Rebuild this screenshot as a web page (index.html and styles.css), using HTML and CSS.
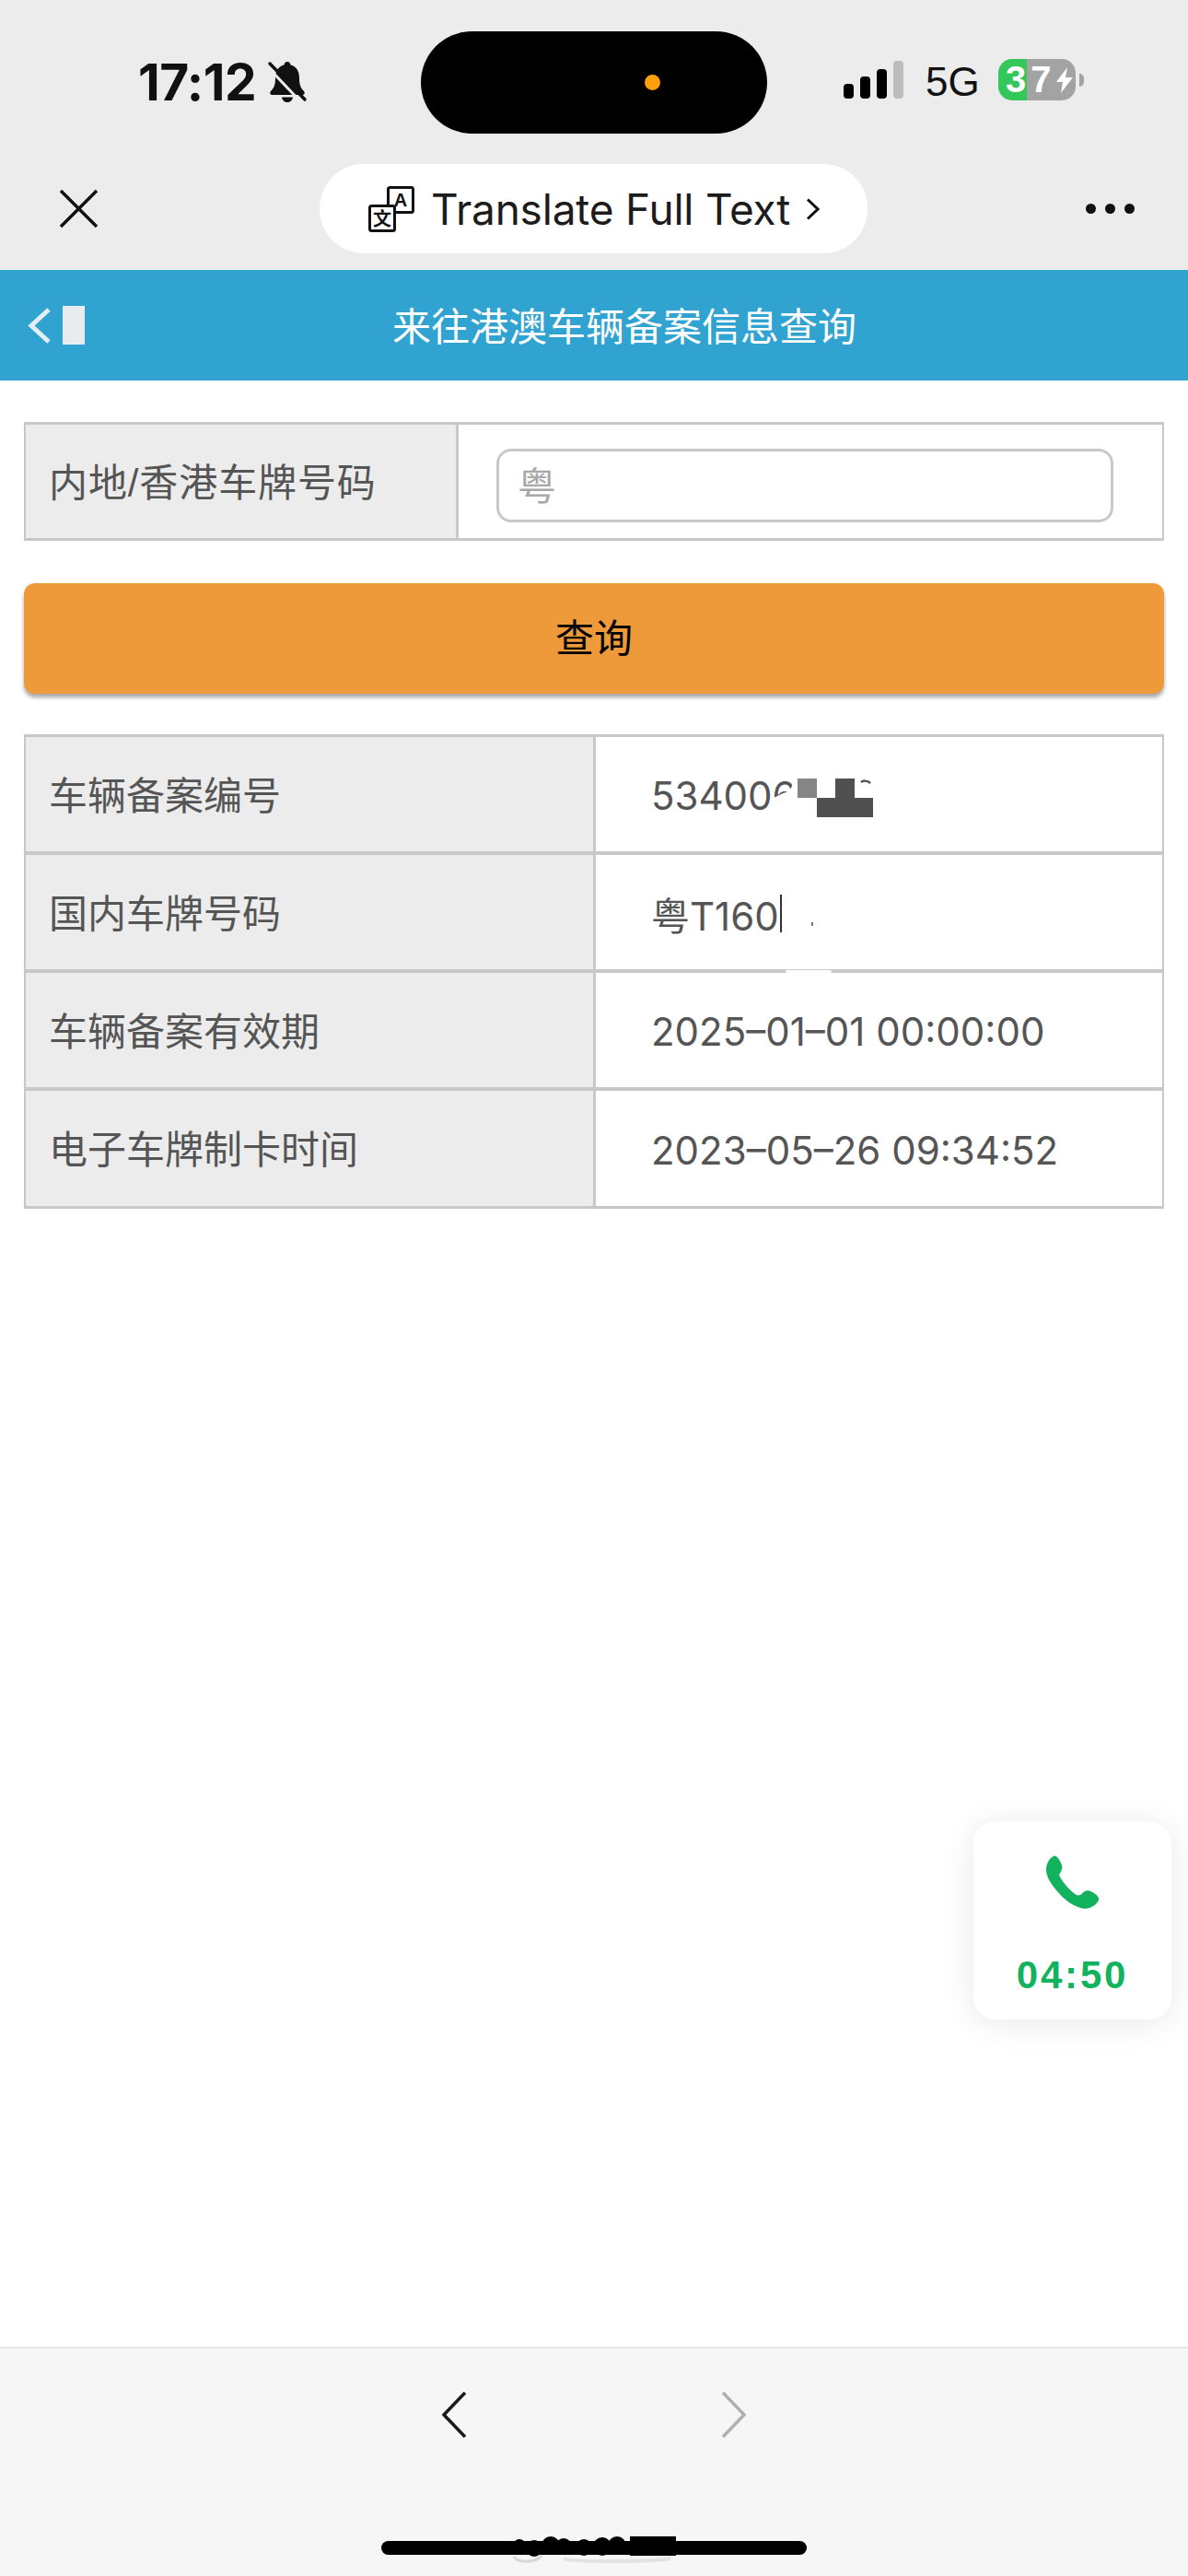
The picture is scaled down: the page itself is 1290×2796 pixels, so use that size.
FILE: index.html
```html
<!DOCTYPE html>
<html lang="zh-CN">
<head>
    <meta charset="UTF-8">
    <meta name="viewport" content="width=device-width, initial-scale=1.0">
    <title>来往港澳车辆备案信息查询</title>
    <link rel="stylesheet" href="styles.css">
</head>
<body>
    <div class="top-chrome">
        <div class="status-bar">
            <span class="time">17:12</span>
            <svg class="bell" viewBox="0 0 44 46">
                <path d="M22 1c-2 0-3.500 1.500-3.500 3.500C11.500 6 9 12 9 19c0 6-1 10-5 14-1.500 2-.5 4 2 4h32c2.500 0 3.500-2 2-4-4-4-5-8-5-14 0-7-2.500-13-9.500-14.500C25.500 2.500 24 1 22 1z" fill="#111"/>
                <path d="M16 39.500h12c-.5 3.500-3 5.500-6 5.500s-5.500-2-6-5.500z" fill="#111"/>
                <path d="M0 6l37 39" stroke="#ececec" stroke-width="3"/>
                <path d="M3 3l38 39" stroke="#111" stroke-width="3.500" stroke-linecap="round"/>
            </svg>
            <div class="island"><span class="island-dot"></span></div>
            <div class="signal">
                <span class="bar bar-1"></span>
                <span class="bar bar-2"></span>
                <span class="bar bar-3"></span>
                <span class="bar bar-4"></span>
            </div>
            <span class="network">5G</span>
            <div class="battery">
                <span class="battery-level">37</span>
                <svg class="bolt" viewBox="0 0 18 28"><path d="M12 0L0 16h7l-2 12L18 11h-8z" fill="#fff"/></svg>
            </div>
            <span class="battery-nub"></span>
        </div>
        <div class="nav-row">
            <svg class="close-icon" viewBox="0 0 43 43"><path d="M2 2l39 39M41 2L2 41" stroke="#111" stroke-width="3.500" fill="none"/></svg>
            <div class="translate-pill">
                <svg class="translate-icon" viewBox="0 0 50 50">
                    <rect x="21.500" y="1.500" width="27" height="27" rx="2" fill="#fff" stroke="#111" stroke-width="3"/>
                    <text x="35" y="22" class="icon-a">A</text>
                    <rect x="1.500" y="21.500" width="27" height="27" rx="2" fill="#fff" stroke="#111" stroke-width="3"/>
                    <text x="15" y="43" class="icon-wen">文</text>
                </svg>
                <span class="translate-text">Translate Full Text</span>
                <svg class="translate-arrow" viewBox="0 0 15 24"><path d="M2 1.500L13 12 2 22.500" stroke="#111" stroke-width="3" fill="none"/></svg>
            </div>
            <div class="more-dots"><span></span><span></span><span></span></div>
        </div>
    </div>

    <header class="page-header">
        <svg class="back-icon" viewBox="0 0 27 41"><path d="M24 3L5 20.500 24 38" stroke="#e4eef5" stroke-width="5" fill="none"/></svg>
        <span class="back-mask"></span>
        <h1>来往港澳车辆备案信息查询</h1>
    </header>

    <main class="content">
        <div class="search-table">
            <div class="label-cell">内地/香港车牌号码</div>
            <div class="input-cell">
                <div class="plate-input">粤</div>
            </div>
        </div>

        <button class="search-button">查询</button>

        <div class="info-table">
            <div class="label-cell">车辆备案编号</div>
            <div class="value-cell">
                534006
                <svg class="mosaic" viewBox="0 0 120 50">
                    <polygon points="0,26 12,20 22,16 28,0 120,0 120,50 0,50" fill="#fff"/>
                    <rect x="30" y="3" width="21" height="21" fill="#858585"/>
                    <rect x="71" y="3" width="21" height="21" fill="#505050"/>
                    <rect x="51" y="24" width="61" height="21" fill="#505050"/>
                    <path d="M99 7c2-2 7-2 10 1" stroke="#505050" stroke-width="2.500" fill="none"/>
                </svg>
            </div>
            <div class="label-cell">国内车牌号码</div>
            <div class="value-cell">粤T160<span class="caret"></span><span class="speck"></span><span class="line-smudge"></span></div>
            <div class="label-cell">车辆备案有效期</div>
            <div class="value-cell">2025–01–01 00:00:00</div>
            <div class="label-cell">电子车牌制卡时间</div>
            <div class="value-cell">2023–05–26 09:34:52</div>
        </div>
    </main>

    <div class="call-card">
        <svg class="call-icon" viewBox="0 0 171 172">
            <path d="M28 0C38 2 46 18 51 30C54 40 50 50 42 62C50 82 72 108 95 125C104 131 112 130 120 120C130 110 142 112 152 119C164 127 173 134 171 142C168 155 150 171 125 172C95 170 62 145 42 122C18 95 0 70 0 45C0 25 12 4 28 0Z" fill="#13b25f"/>
        </svg>
        <span class="call-time">04:50</span>
    </div>

    <footer class="bottom-bar">
        <div class="page-arrows">
            <svg class="arrow" viewBox="0 0 26 50"><path d="M25 1L2 25l23 24" stroke="#1a1a1a" stroke-width="3.500" fill="none"/></svg>
            <svg class="arrow" viewBox="0 0 26 50"><path d="M1 1l23 24L1 49" stroke="#b0b0b0" stroke-width="3.500" fill="none"/></svg>
        </div>
        <div class="home-bar">
            <svg class="home-smudge" viewBox="0 0 186 40">
                <path d="M8 31c4 7 24 7 30-1" stroke="#d8d8d8" stroke-width="3" fill="none"/>
                <path d="M62 33c10 4 90 4 116 0" stroke="#e2e2e2" stroke-width="4" fill="none"/>
                <g class="smudge-blobs">
                    <rect x="0" y="14" width="186" height="15"/>
                    <circle cx="14" cy="19" r="7"/>
                    <circle cx="30" cy="22" r="9"/>
                    <circle cx="48" cy="19" r="10"/>
                    <circle cx="62" cy="20" r="9"/>
                    <circle cx="84" cy="21" r="9"/>
                    <circle cx="104" cy="20" r="10"/>
                    <circle cx="120" cy="19" r="10"/>
                    <rect x="134" y="9" width="50" height="21"/>
                </g>
            </svg>
        </div>
    </footer>
</body>
</html>
```

FILE: styles.css
```css
body {
    margin: 0;
    width: 1290px;
    height: 2796px;
    display: flex;
    flex-direction: column;
    position: relative;
    overflow: hidden;
    background: white;
    font-family: "Liberation Sans", "Noto Sans CJK SC", sans-serif;
    color: #555;
}

.top-chrome {
    height: 293px;
    background-color: #ececec;
}

.status-bar {
    height: 178px;
    display: flex;
    align-items: center;
    padding-left: 150px;
    box-sizing: border-box;
}

.time {
    width: 128px;
    font-family: Inter, sans-serif;
    font-size: 55px;
    font-weight: 700;
    letter-spacing: -0.5px;
    color: #111;
}

.bell {
    width: 44px;
    height: 46px;
    margin-left: 12px;
}

.island {
    width: 376px;
    height: 111px;
    margin-left: 123px;
    background: black;
    border-radius: 56px;
    display: flex;
    align-items: center;
}

.island-dot {
    width: 17px;
    height: 17px;
    margin-left: 243px;
    background: #ff9f0a;
    border-radius: 50%;
}

.signal {
    display: flex;
    align-items: flex-end;
    gap: 7px;
    margin-left: 83px;
    margin-bottom: 5px;
}

.bar {
    width: 11px;
    background: black;
    border-radius: 4px;
}

.bar-1 { height: 16px; }
.bar-2 { height: 24px; }
.bar-3 { height: 32px; }
.bar-4 { height: 41px; background: #bcbcbc; }

.network {
    margin-left: 24px;
    width: 55px;
    font-size: 44px;
    color: #111;
}

.battery {
    width: 84px;
    height: 45px;
    margin-left: 24px;
    margin-bottom: 5px;
    display: flex;
    align-items: center;
    padding-left: 8px;
    box-sizing: border-box;
    border-radius: 15px;
    background: linear-gradient(to right, #34c759 37%, #a3a3a3 37%);
}

.battery-level {
    font-size: 40px;
    font-weight: bold;
    letter-spacing: 5px;
    color: white;
}

.bolt {
    width: 18px;
    height: 28px;
}

.battery-nub {
    width: 5px;
    height: 14px;
    margin-left: 4px;
    margin-bottom: 5px;
    background: #a3a3a3;
    border-radius: 0 5px 5px 0;
}

.nav-row {
    height: 97px;
    display: flex;
    align-items: center;
}

.close-icon {
    width: 43px;
    height: 43px;
    margin-left: 64px;
}

.translate-pill {
    width: 595px;
    height: 97px;
    margin-left: 240px;
    padding-left: 53px;
    box-sizing: border-box;
    display: flex;
    align-items: center;
    background: white;
    border-radius: 48px;
}

.translate-icon {
    width: 50px;
    height: 50px;
}

.icon-a,
.icon-wen {
    font-size: 20px;
    font-weight: bold;
    text-anchor: middle;
    fill: #111;
}

.translate-text {
    width: 407px;
    margin-left: 18px;
    font-family: Inter, sans-serif;
    font-size: 46px;
    letter-spacing: -0.2px;
    color: #1c1c1c;
}

.translate-arrow {
    width: 15px;
    height: 24px;
}

.more-dots {
    display: flex;
    gap: 10px;
    margin-left: 237px;
}

.more-dots span {
    width: 11px;
    height: 11px;
    background: #111;
    border-radius: 50%;
}

.page-header {
    height: 120px;
    display: flex;
    align-items: center;
    padding-left: 29px;
    background-color: #31a3d1;
}

.back-icon {
    width: 27px;
    height: 41px;
}

.back-mask {
    width: 24px;
    height: 42px;
    margin-left: 12px;
    background: #e8ecf0;
}

.page-header h1 {
    margin: 0 0 4px 334px;
    font-size: 42px;
    font-weight: normal;
    color: white;
}

.content {
    padding: 45px 26px 0;
    width: 1238px;
}

.search-table,
.info-table {
    display: grid;
    border: solid #c8c8c8;
    border-width: 3px 2px;
}

.search-table {
    grid-template-columns: 470px 1fr;
    height: 129px;
    box-sizing: border-box;
}

.info-table {
    grid-template-columns: 619px 1fr;
    grid-template-rows: 128px 128px 128px 125px;
}

.label-cell {
    display: flex;
    align-items: center;
    padding-left: 25px;
    padding-bottom: 4px;
    box-sizing: border-box;
    background-color: #ececec;
    border-right: 3px solid #c8c8c8;
    font-size: 42px;
}

.search-table .label-cell {
    letter-spacing: 0.9px;
}

.input-cell {
    display: flex;
    align-items: center;
    padding-left: 41px;
}

.plate-input {
    width: 670px;
    height: 80px;
    margin-top: 8px;
    box-sizing: border-box;
    display: flex;
    align-items: center;
    padding: 0 0 4px 20px;
    border: 3px solid #c8c8c8;
    border-radius: 16px;
    font-size: 42px;
    color: #a8a8a8;
}

.search-button {
    display: block;
    width: 100%;
    height: 120px;
    margin: 46px 0 44px;
    padding: 0 0 7px;
    background-color: #ee9a3a;
    border: none;
    border-radius: 12px;
    box-shadow: 0 4px 4px rgba(0, 0, 0, 0.35);
    font-family: inherit;
    font-size: 42px;
    color: black;
}

.value-cell {
    position: relative;
    display: flex;
    align-items: center;
    padding-left: 60px;
    padding-top: 3px;
    box-sizing: border-box;
    font-family: Inter, "Noto Sans CJK SC", sans-serif;
    font-size: 42px;
}

.info-table .label-cell,
.info-table .value-cell {
    border-bottom: 4px solid #c8c8c8;
}

.info-table .label-cell:nth-last-child(2),
.info-table .value-cell:last-child {
    border-bottom: none;
}

.mosaic {
    position: absolute;
    left: 189px;
    top: 42px;
    width: 120px;
    height: 50px;
}

.caret {
    width: 2px;
    height: 41px;
    margin-left: 1px;
    background: #333;
}

.speck {
    position: absolute;
    left: 234px;
    top: 73px;
    width: 2px;
    height: 4px;
    background: #777;
}

.line-smudge {
    position: absolute;
    left: 206px;
    bottom: -4px;
    width: 50px;
    height: 3px;
    background: white;
    border-radius: 2px;
}

.call-card {
    position: absolute;
    left: 1057px;
    top: 1977px;
    width: 215px;
    height: 215px;
    display: flex;
    flex-direction: column;
    align-items: center;
    background: white;
    border-radius: 24px;
    box-shadow: 0 4px 36px rgba(0, 0, 0, 0.09);
}

.call-icon {
    width: 57px;
    height: 58px;
    margin-top: 37px;
}

.call-time {
    margin-top: 48px;
    font-size: 42px;
    font-weight: bold;
    letter-spacing: 2.8px;
    color: #13b25f;
}

.bottom-bar {
    margin-top: auto;
    height: 249px;
    box-sizing: border-box;
    border-top: 2px solid #e6e6e6;
    background-color: #f6f6f7;
    display: flex;
    flex-direction: column;
    align-items: center;
}

.page-arrows {
    display: flex;
    gap: 278px;
    margin-top: 47px;
}

.arrow {
    width: 26px;
    height: 50px;
}

.home-bar {
    position: relative;
    width: 462px;
    height: 15px;
    margin-top: 112px;
    background: black;
    border-radius: 8px;
}

.home-smudge {
    position: absolute;
    left: 136px;
    top: -14px;
    width: 186px;
    height: 40px;
}

.smudge-blobs {
    fill: black;
}
```
